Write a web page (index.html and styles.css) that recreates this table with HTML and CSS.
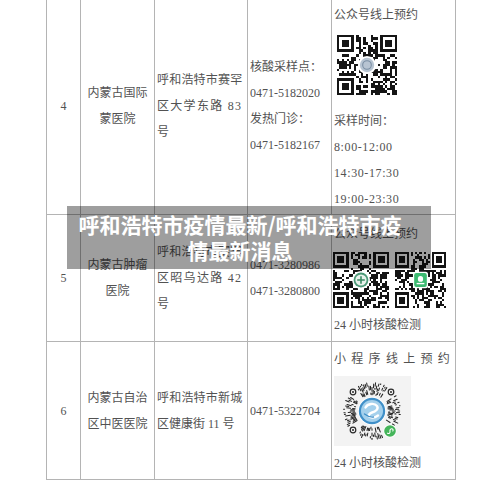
FILE: index.html
```html
<!DOCTYPE html>
<html lang="zh-CN">
<head>
<meta charset="utf-8">
<title>呼和浩特市疫情最新</title>
<link rel="stylesheet" href="styles.css">
</head>
<body>
<div class="page">
  <div class="grid">
    <div class="cell num">4</div>
    <div class="cell name">内蒙古国际<br>蒙医院</div>
    <div class="cell addr"><span class="ln sp">呼和浩特市赛罕</span><span class="ln sp2">区大学东路 83</span><span class="ln">号</span></div>
    <div class="cell phone">核酸采样点：<br>0471-5182020<br>发热门诊：<br>0471-5182167</div>
    <div class="cell book b4">
      <div class="ln">公众号线上预约</div>
      <svg class="qr qr1" data-n="25" data-seed="11" data-hole="3.6" viewBox="0 0 25 25" width="60" height="60" shape-rendering="crispEdges">
        <circle cx="12.5" cy="12.5" r="3.8" fill="#fff" shape-rendering="auto"/>
        <circle cx="12.5" cy="12.5" r="3" fill="#b7c4d2" shape-rendering="auto"/>
        <circle cx="12.5" cy="12.5" r="1.8" fill="none" stroke="#7a8ea3" stroke-width="0.45" shape-rendering="auto"/>
      </svg>
      <div class="ln">采样时间：</div>
      <div class="ln tm">8:00-12:00</div>
      <div class="ln tm">14:30-17:30</div>
      <div class="ln tm">19:00-23:30</div>
    </div>

    <div class="cell num">5</div>
    <div class="cell name">内蒙古肿瘤<br>医院</div>
    <div class="cell addr"><span class="ln sp">呼和浩特市赛罕</span><span class="ln sp2">区昭乌达路 42</span><span class="ln">号</span></div>
    <div class="cell phone">0471-3280986<br>0471-3280800</div>
    <div class="cell book b5">
      <div class="ln">公众号线上预约</div>
      <div class="qrs">
        <svg class="qr" data-n="25" data-seed="23" data-hole="3.8" viewBox="0 0 25 25" width="56" height="56" shape-rendering="crispEdges">
          <circle cx="12.5" cy="12.5" r="4" fill="#fff" shape-rendering="auto"/>
          <circle cx="12.5" cy="12.5" r="3.3" fill="#4c9a78" shape-rendering="auto"/>
          <circle cx="12.5" cy="12.5" r="2.5" fill="#e8f2ec" shape-rendering="auto"/>
          <path d="M12.5 10.8v3.4M10.8 12.5h3.4" stroke="#3a8a64" stroke-width="0.7" shape-rendering="auto"/>
        </svg>
        <svg class="qr" data-n="25" data-seed="37" data-hole="3.9" viewBox="0 0 25 25" width="51" height="56" preserveAspectRatio="none" shape-rendering="crispEdges">
          <rect x="8.8" y="8.8" width="7.4" height="7.4" rx="1.2" fill="#fff" shape-rendering="auto"/>
          <rect x="9.4" y="9.4" width="6.2" height="6.2" rx="1" fill="#3dbb72" shape-rendering="auto"/>
          <circle cx="12.5" cy="12" r="1.3" fill="#fff" shape-rendering="auto"/>
          <rect x="10.6" y="13.8" width="3.8" height="0.6" fill="#fff" shape-rendering="auto"/>
        </svg>
      </div>
      <div class="ln">24 小时核酸检测</div>
    </div>

    <div class="cell num">6</div>
    <div class="cell name">内蒙古自治<br>区中医医院</div>
    <div class="cell addr"><span class="ln sp">呼和浩特市新城</span><span class="ln">区健康街 11 号</span></div>
    <div class="cell phone">0471-5322704</div>
    <div class="cell book b6">
      <div class="ln wide">小程序线上预约</div>
      <svg class="mini" viewBox="0 0 77 70" width="77" height="70">
        <rect width="77" height="70" fill="#f3f3f3"/>
        <g class="eyes" fill="none" stroke="#2a2a2a" stroke-width="1.2">
          <circle cx="19" cy="16" r="2.8"/>
          <circle cx="57" cy="16" r="2.8"/>
          <circle cx="19" cy="54" r="2.8"/>
        </g>
        <g fill="#2a2a2a">
          <circle cx="19" cy="16" r="1"/>
          <circle cx="57" cy="16" r="1"/>
          <circle cx="19" cy="54" r="1"/>
        </g>
        <g class="logo">
          <circle cx="38" cy="35" r="14" fill="#fff"/>
          <circle cx="38" cy="35" r="13.2" fill="#3f8fc8"/>
          <circle cx="38" cy="35" r="11" fill="#a4d0ec"/>
          <path d="M31.5 31.5c2-4 9-5 11.5-1.5c2 3-1.5 5.5-5 6.5c-3 1-4.5 3-2 4.5c2.5 1.2 6 0 8-1.5" fill="none" stroke="#fff" stroke-width="2.4" stroke-linecap="round"/>
          <path d="M30.5 38c2 1.5 5 3.5 9 3" fill="none" stroke="#3f8fc8" stroke-width="1.3" stroke-linecap="round"/>
          <circle cx="56" cy="55" r="6.6" fill="#fff"/>
          <circle cx="56" cy="55" r="5.8" fill="#45b55a"/>
          <path d="M53.6 57.2c1.2 0.8 2.6-0.2 2.4-1.6c-0.2-1.4 0-2.6 1.6-2.8c1.2-0.1 2 1.2 1.2 2.2" fill="none" stroke="#fff" stroke-width="1.1" stroke-linecap="round"/>
        </g>
      </svg>
      <div class="ln">24 小时核酸检测</div>
    </div>
  </div>
  <div class="banner">呼和浩特市疫情最新/呼和浩特市疫情最新消息</div>
</div>
<script src="script.js"></script>
</body>
</html>
```

FILE: styles.css
```css
html, body {
  margin: 0;
  padding: 0;
  background: #fff;
}
body {
  width: 500px;
  height: 482px;
  overflow: hidden;
}
.page {
  position: relative;
  width: 500px;
  height: 482px;
}
.grid {
  display: grid;
  grid-template-columns: 33px 73px 92px 83px 123px;
  grid-template-rows: 216px 126px 137px;
  gap: 1px;
  padding: 1px;
  width: 410px;
  box-sizing: border-box;
  background: #b4b4b4;
  margin: -3px 0 0 46px;
  font-family: "Liberation Serif", "Noto Sans CJK SC", serif;
  font-size: 12px;
  line-height: 26px;
  color: #525252;
}
.cell {
  background: #fff;
  display: flex;
  flex-direction: column;
  justify-content: center;
  min-width: 0;
  overflow: hidden;
}
.num {
  align-items: center;
  font-size: 12px;
}
.name {
  align-items: center;
  text-align: center;
}
.addr {
  padding-left: 2px;
}
.ln {
  display: block;
  white-space: nowrap;
}
.sp {
  letter-spacing: 0.2px;
}
.sp2 {
  letter-spacing: 1.3px;
}
.phone {
  padding-left: 2px;
}
.book {
  justify-content: flex-start;
  padding-left: 2px;
}
.tm {
  letter-spacing: 0.6px;
}
.wide {
  letter-spacing: 5.3px;
}
.b4 {
  padding-top: 4px;
}
.b5 {
  padding-top: 6px;
}
.b6 {
  padding-top: 4px;
}
.qr, .mini {
  display: block;
}
.qr1 {
  margin: 7px 0 13px 3px;
}
.qrs {
  display: flex;
  gap: 6px;
  margin: 5px 0 4px -1px;
}
.mini {
  margin: 4px 0 4px 0;
}
.banner {
  position: absolute;
  left: 67px;
  top: 209px;
  width: 364px;
  height: 63px;
  box-sizing: border-box;
  padding: 5px 27px 6px 9px;
  background: rgba(0, 0, 0, 0.38);
  color: #fff;
  font-family: "Noto Sans CJK SC", "Noto Sans", sans-serif;
  font-weight: 700;
  font-size: 21px;
  line-height: 26px;
  text-align: center;
}
```

FILE: script.js
```js
(function () {
  var NS = 'http://www.w3.org/2000/svg';
  function rng(a) {
    return function () {
      a |= 0; a = a + 0x6D2B79F5 | 0;
      var t = Math.imul(a ^ a >>> 15, 1 | a);
      t = t + Math.imul(t ^ t >>> 7, 61 | t) ^ t;
      return ((t ^ t >>> 14) >>> 0) / 4294967296;
    };
  }
  function el(n, attrs) {
    var e = document.createElementNS(NS, n);
    for (var k in attrs) e.setAttribute(k, attrs[k]);
    return e;
  }
  document.querySelectorAll('svg.qr').forEach(function (svg) {
    var n = +svg.dataset.n, r = rng(+svg.dataset.seed), h = +svg.dataset.hole || 0, c = n / 2, d = '';
    function inF(x, y) {
      return (x < 8 && y < 8) || (x >= n - 8 && y < 8) || (x < 8 && y >= n - 8);
    }
    [[0, 0], [n - 7, 0], [0, n - 7]].forEach(function (p) {
      var x = p[0], y = p[1];
      d += 'M' + x + ' ' + y + 'h7v7h-7z';
      d += 'M' + (x + 1) + ' ' + (y + 1) + 'h5v5h-5z';
      d += 'M' + (x + 2) + ' ' + (y + 2) + 'h3v3h-3z';
    });
    for (var y = 0; y < n; y++) {
      for (var x = 0; x < n; x++) {
        if (inF(x, y)) continue;
        var dx = x + 0.5 - c, dy = y + 0.5 - c;
        if (h && dx * dx + dy * dy < h * h) continue;
        if (r() < 0.52) d += 'M' + x + ' ' + y + 'h1v1h-1z';
      }
    }
    svg.insertBefore(el('path', { d: d, fill: '#151515', 'fill-rule': 'evenodd' }), svg.firstChild);
    svg.insertBefore(el('rect', { width: n, height: n, fill: '#fff' }), svg.firstChild);
  });

  var m = document.querySelector('svg.mini');
  if (m) {
    var r = rng(7), cx = 38, cy = 35;
    var g = el('g', { stroke: '#262626', 'stroke-width': '1.05', 'stroke-linecap': 'round' });
    var skips = [225, 315, 135, 50];
    var N = 100;
    for (var i = 0; i < N; i++) {
      var deg = i * 360 / N;
      var skip = false;
      for (var s = 0; s < skips.length; s++) {
        var diff = Math.abs(((deg - skips[s]) + 540) % 360 - 180);
        if (diff < (s === 3 ? 16 : 10)) skip = true;
      }
      if (skip) continue;
      var a = deg * Math.PI / 180;
      var rad = 16 + r() * 2;
      while (rad < 28) {
        var len = 0.6 + r() * 4.5;
        var r1 = Math.min(rad + len, 28.5);
        if (r() < 0.8) {
          g.appendChild(el('line', {
            x1: (cx + Math.cos(a) * rad).toFixed(2), y1: (cy + Math.sin(a) * rad).toFixed(2),
            x2: (cx + Math.cos(a) * r1).toFixed(2), y2: (cy + Math.sin(a) * r1).toFixed(2)
          }));
        }
        rad = r1 + 1.6 + r() * 2.5;
      }
    }
    m.insertBefore(g, m.querySelector('.logo'));
  }
})();
```
